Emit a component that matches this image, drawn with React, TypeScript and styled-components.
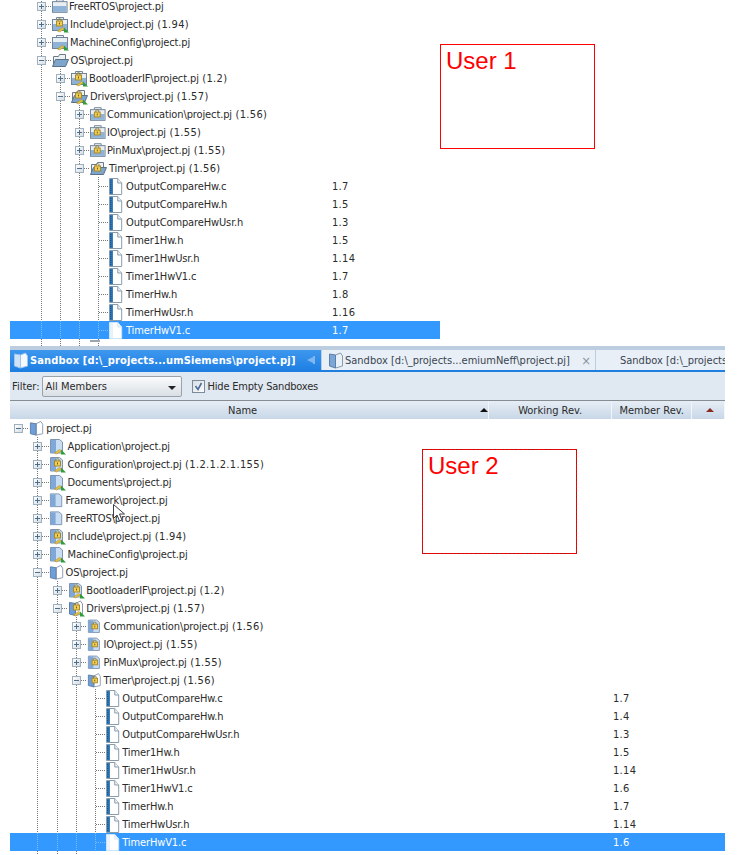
import React from "react";
import styled, { createGlobalStyle } from "styled-components";

const Global = createGlobalStyle`
  html, body { margin: 0; padding: 0; background: #fff; }
  body { font-family: "DejaVu Sans Condensed", Tahoma, "DejaVu Sans", sans-serif; font-size: 11px; color: #2b2b2b; }
`;

const Page = styled.div`
  position: relative;
  width: 738px;
  height: 855px;
  overflow: hidden;
  background: #fff;
`;

const TopPanel = styled.section`
  position: relative;
  height: 346px;
  padding-left: 10px;
  box-sizing: border-box;
  overflow: hidden;
`;

const BottomPanel = styled.section`
  position: relative;
  width: 715px;
  height: 509px;
  margin-left: 10px;
  overflow: hidden;
`;

const TopList = styled.div`
  width: 430px;
  margin-top: -3px;
`;

const Note = styled.div<{ $dotted?: boolean; $x: number; $y: number }>`
  position: absolute;
  left: ${(p) => p.$x}px;
  top: ${(p) => p.$y}px;
  width: 155px;
  height: 105px;
  box-sizing: border-box;
  border: 1px solid #ff0000;
  ${(p) => (p.$dotted ? "border-image: repeating-linear-gradient(45deg, #ff0000 0 2px, #a01818 2px 3px) 1;" : "")}
  padding: 0 5px;
  color: #ff0000;
  font: 24px/32px "Liberation Sans", Arial, sans-serif;
`;

const Row = styled.div<{ $selected?: boolean; $pad: number }>`
  display: flex;
  align-items: center;
  height: 18px;
  padding-left: ${(p) => p.$pad}px;
  background: ${(p) => (p.$selected ? "#3399ff" : "transparent")};
  color: ${(p) => (p.$selected ? "#ffffff" : "#2b2b2b")};
`;

const TreePart = styled.div<{ $w: number }>`
  display: flex;
  align-items: center;
  flex: 0 0 ${(p) => p.$w}px;
  height: 18px;
`;

const Guide = styled.span<{ $step: number; $hidden?: boolean; $selected?: boolean }>`
  flex: 0 0 ${(p) => p.$step}px;
  height: 100%;
  box-sizing: border-box;
  margin: 0;
  background-image: ${(p) =>
    p.$hidden
      ? "none"
      : `linear-gradient(${p.$selected ? "#7dbcf7" : "#777"} 50%, transparent 50%)`};
  background-size: 1px 2px;
  background-repeat: repeat-y;
  background-position: 8px 0;
`;

const Branch = styled.span<{ $step: number; $selected?: boolean }>`
  position: relative;
  flex: 0 0 ${(p) => p.$step}px;
  height: 100%;
  display: flex;
  align-items: center;
  padding-left: 4px;
  box-sizing: border-box;
  &::before {
    content: "";
    position: absolute;
    left: 8px;
    top: 0;
    bottom: 0;
    width: 1px;
    background-image: linear-gradient(${(p) => (p.$selected ? "#7dbcf7" : "#777")} 50%, transparent 50%);
    background-size: 1px 2px;
  }
  &::after {
    content: "";
    position: absolute;
    left: 9px;
    right: 0;
    top: 9px;
    height: 1px;
    background-image: linear-gradient(90deg, ${(p) => (p.$selected ? "#7dbcf7" : "#777")} 50%, transparent 50%);
    background-size: 2px 1px;
  }
`;

const BranchRoot = styled(Branch)`
  &::before { display: none; }
`;

const Expander = styled.span`
  position: relative;
  z-index: 1;
  width: 9px;
  height: 9px;
  box-sizing: border-box;
  border: 1px solid #9fb0bf;
  background: linear-gradient(135deg, #ffffff, #d6dde3);
  display: block;
`;

const Bar = styled.i<{ $v?: boolean }>`
  position: absolute;
  background: #4d6f8c;
  ${(p) =>
    p.$v
      ? "left: 3px; top: 1px; width: 1px; height: 5px;"
      : "left: 1px; top: 3px; width: 5px; height: 1px;"}
`;

const IconSlot = styled.span<{ $w: number }>`
  flex: 0 0 ${(p) => p.$w}px;
  min-width: 0;
  display: flex;
  align-items: center;
  height: 18px;
`;

const Label = styled.span`
  white-space: nowrap;
  letter-spacing: -0.12px;
`;

const Version = styled.span`
  letter-spacing: 0.35px;
`;

const Rev = styled.span`
  white-space: nowrap;
  letter-spacing: 0.3px;
`;

const Tail = styled.div<{ $h: number; $pad: number }>`
  display: flex;
  height: ${(p) => p.$h}px;
  padding-left: ${(p) => p.$pad}px;
  overflow: hidden;
`;

const Stub = styled.span`
  width: 10px;
  height: 2px;
  margin-top: 1px;
  margin-left: -19px;
  background: #9aa5b0;
`;

/* sandbox chrome */
const TabStrip = styled.div`
  display: flex;
  height: 26px;
  box-sizing: border-box;
  padding-top: 4px;
  background: #bccddf;
  border-bottom: 2px solid #1f7fe0;
  overflow: hidden;
`;

const Tab = styled.div<{ $active?: boolean; $w: number; $pad: number }>`
  flex: 0 0 ${(p) => p.$w}px;
  box-sizing: border-box;
  display: flex;
  align-items: center;
  gap: ${(p) => (p.$active ? 1 : 1)}px;
  padding-left: ${(p) => p.$pad}px;
  margin-right: 1px;
  white-space: nowrap;
  background: ${(p) => (p.$active ? "linear-gradient(#3d97ee, #1f80e4)" : "#e8eff6")};
  color: ${(p) => (p.$active ? "#ffffff" : "#3a4450")};
  font-weight: ${(p) => (p.$active ? 700 : 400)};
  letter-spacing: ${(p) => (p.$active ? "0.15px" : "0")};
  height: 20px;
`;

const TabClose = styled.span`
  margin-left: auto;
  margin-right: 4px;
  color: #8a949e;
  font-size: 13px;
  line-height: 1;
`;

const PinMark = styled.span`
  margin-left: auto;
  margin-right: 4px;
  display: flex;
`;

const FilterBar = styled.div`
  display: flex;
  align-items: center;
  height: 28px;
  padding-left: 2px;
  background: #e0e8f1;
`;

const FilterLabel = styled.span`
  margin-right: 2px;
`;

const Combo = styled.div`
  width: 140px;
  height: 21px;
  box-sizing: border-box;
  border: 1px solid #9aa2aa;
  border-radius: 2px;
  background: linear-gradient(#fafbfc, #d9dfe5);
  display: flex;
  align-items: center;
  padding: 0 5px 0 3px;
`;

const ComboArrow = styled.span`
  margin-left: auto;
  margin-top: 3px;
  width: 0;
  height: 0;
  border-left: 4px solid transparent;
  border-right: 4px solid transparent;
  border-top: 4px solid #222;
`;

const Check = styled.span`
  margin-left: 10px;
  margin-right: 3px;
  width: 13px;
  height: 13px;
  box-sizing: border-box;
  border: 1px solid #7d8a98;
  background: linear-gradient(135deg, #d9dee4, #fbfcfd);
  display: flex;
`;

const CheckLabel = styled.span`
  letter-spacing: -0.2px;
`;

const HeaderRow = styled.div`
  display: flex;
  height: 18px;
  border-top: 1px solid #868c92;
  background: linear-gradient(#e6edf5, #c8d7e7);
`;

const HeadCell = styled.div<{ $w: number; $center?: boolean }>`
  flex: 0 0 ${(p) => p.$w}px;
  box-sizing: border-box;
  display: flex;
  align-items: center;
  justify-content: ${(p) => (p.$center ? "center" : "flex-start")};
  border-right: 1px solid #f2f6fa;
`;

const NameHead = styled.span`
  margin-left: 218px;
`;

const SortArrow = styled.span<{ $color: string; $left: number }>`
  margin-left: ${(p) => p.$left}px;
  width: 0;
  height: 0;
  border-left: 4px solid transparent;
  border-right: 4px solid transparent;
  border-bottom: 4px solid ${(p) => p.$color};
`;

const TreeBody = styled.div`
  width: 715px;
  background: #fff;
`;

const Cursor = styled.svg`
  position: absolute;
  left: 103px;
  top: 158px;
`;

type Base = "folder" | "open" | "book" | "openBook";
type IconSpec = { base: Base; lock?: boolean; arrow?: boolean };

function Lock({ x, y }: { x: number; y: number }) {
  return (
    <g transform={`translate(${x} ${y})`}>
      <path d="M2 3V1.5C2 .5 5 .5 5 1.5V3" fill="none" stroke="#8c7a2a" />
      <rect x="0.5" y="3" width="6" height="5" fill="#f1cf52" stroke="#a8882c" />
      <rect x="3" y="4.6" width="1" height="1.8" fill="#6e5a16" />
    </g>
  );
}

function ProjectIcon({ base, lock, arrow }: IconSpec) {
  return (
    <svg width="18" height="17" viewBox="0 0 18 17" aria-hidden="true">
      {base === "folder" && (
        <g>
          <path d="M4.500 3.500V1.500h7v2" fill="#eef2f5" stroke="#76879a" />
          <rect x="0.5" y="3.500" width="15" height="11" fill="#e9eef3" stroke="#71859a" />
          <rect x="1" y="8" width="14" height="6" fill="#8fb3d6" />
        </g>
      )}
      {base === "open" && (
        <g>
          <path d="M1.500 12V4.500h5l1-2h6v5" fill="#eef1f4" stroke="#6d7b88" />
          <path d="M.5 14.500l3-7h13l-3 7z" fill="#7ea6cd" stroke="#5c7186" />
        </g>
      )}
      {base === "book" && (
        <g>
          <path d="M1.500 1.500h9l3 2.500v11h-12z" fill="#c8dcf2" stroke="#7d95b0" />
          <rect x="2" y="2" width="5" height="13" fill="#7fa8d9" />
        </g>
      )}
      {base === "openBook" && (
        <g>
          <path d="M7.500 3.500l5-2.500 2 3v10l-7 1.500z" fill="#ffffff" stroke="#8a9bb0" />
          <path d="M1.500 2.500l6 1v12l-6-1.500z" fill="#6f9fd8" stroke="#5d7ea6" />
        </g>
      )}
      {lock && <Lock x={base === "book" || base === "openBook" ? 5 : 4} y={arrow ? 2 : 3} />}
      {arrow && (
        <g>
          <path d="M5.500 15l5-3.500 2 1.500-5 3z" fill="#e6c23c" stroke="#a8882c" strokeWidth="0.5" />
          <path d="M12 16.500v-5l5 5z" fill="#2f9e3a" />
        </g>
      )}
    </svg>
  );
}

function FileIcon({ selected }: { selected?: boolean }) {
  return (
    <svg width="14" height="17" viewBox="0 0 16 17" preserveAspectRatio="none" aria-hidden="true">
      <path
        d="M.5 .5h9.500l4.500 4.500v11.500h-14z"
        fill="#ffffff"
        stroke={selected ? "#cfe4fa" : "#8296a8"}
      />
      <path d="M10 .5v4.500h4.500" fill="#f1f5f9" stroke={selected ? "#cfe4fa" : "#8296a8"} />
      <rect x="1" y="1" width="3.500" height="15" fill={selected ? "#e8f2fc" : "#2f76b4"} />
      {!selected && <path d="M2 2v13" stroke="#0e4a82" strokeDasharray="1 1" />}
    </svg>
  );
}

function BookTab({ open }: { open?: boolean }) {
  return (
    <svg width="16" height="17" viewBox="0 0 16 17" aria-hidden="true">
      <path d="M7.500 3l5-2 2 3v10l-7 2z" fill={open ? "#f6fafd" : "#e9f1f8"} stroke={open ? "#9ec6ee" : "#8a9bb0"} />
      <path d="M1.500 2l6 1v13l-6-2z" fill={open ? "#cfe3f8" : "#7aa6d8"} stroke={open ? "#9ec6ee" : "#5d7ea6"} />
    </svg>
  );
}

type TreeRow = {
  depth: number;
  label: string;
  rev?: string;
  icon?: IconSpec;
  state?: "plus" | "minus";
  slot: number;
  selected?: boolean;
};

function NodeRow({
  row,
  step,
  pad,
  width,
  skipFirst,
}: {
  row: TreeRow;
  step: number;
  pad: number;
  width: number;
  skipFirst?: boolean;
}) {
  const BranchKind = skipFirst && row.depth === 0 ? BranchRoot : Branch;
  const cut = row.label.indexOf(" (");
  const name = cut < 0 ? row.label : row.label.slice(0, cut);
  const version = cut < 0 ? "" : row.label.slice(cut);
  return (
    <Row $selected={row.selected} $pad={pad}>
      <TreePart $w={width}>
        {Array.from({ length: row.depth }).map((_, i) => (
          <Guide key={i} $step={step} $hidden={skipFirst && i === 0} $selected={row.selected} />
        ))}
        <BranchKind $step={step} $selected={row.selected}>
          {row.state && (
            <Expander>
              <Bar />
              {row.state === "plus" && <Bar $v />}
            </Expander>
          )}
        </BranchKind>
        <IconSlot $w={row.slot}>
          {row.icon ? <ProjectIcon {...row.icon} /> : <FileIcon selected={row.selected} />}
        </IconSlot>
        <Label>
          {name}
          {version && <Version>{version}</Version>}
        </Label>
      </TreePart>
      {row.rev && <Rev>{row.rev}</Rev>}
    </Row>
  );
}

const topRows: TreeRow[] = [
  { depth: 0, label: "FreeRTOS\\project.pj", state: "plus", slot: 17.5, icon: { base: "folder" } },
  { depth: 0, label: "Include\\project.pj (1.94)", state: "plus", slot: 18.5, icon: { base: "folder", lock: true, arrow: true } },
  { depth: 0, label: "MachineConfig\\project.pj", state: "plus", slot: 18.5, icon: { base: "folder", arrow: true } },
  { depth: 0, label: "OS\\project.pj", state: "minus", slot: 19, icon: { base: "open" } },
  { depth: 1, label: "BootloaderIF\\project.pj (1.2)", state: "plus", slot: 18.5, icon: { base: "folder", lock: true, arrow: true } },
  { depth: 1, label: "Drivers\\project.pj (1.57)", state: "minus", slot: 19.5, icon: { base: "open", lock: true, arrow: true } },
  { depth: 2, label: "Communication\\project.pj (1.56)", state: "plus", slot: 17.5, icon: { base: "folder", lock: true } },
  { depth: 2, label: "IO\\project.pj (1.55)", state: "plus", slot: 17.5, icon: { base: "folder", lock: true } },
  { depth: 2, label: "PinMux\\project.pj (1.55)", state: "plus", slot: 17.5, icon: { base: "folder", lock: true } },
  { depth: 2, label: "Timer\\project.pj (1.56)", state: "minus", slot: 19.5, icon: { base: "open", lock: true } },
  { depth: 3, label: "OutputCompareHw.c", rev: "1.7", slot: 17.5 },
  { depth: 3, label: "OutputCompareHw.h", rev: "1.5", slot: 17.5 },
  { depth: 3, label: "OutputCompareHwUsr.h", rev: "1.3", slot: 17.5 },
  { depth: 3, label: "Timer1Hw.h", rev: "1.5", slot: 17.5 },
  { depth: 3, label: "Timer1HwUsr.h", rev: "1.14", slot: 17.5 },
  { depth: 3, label: "Timer1HwV1.c", rev: "1.7", slot: 17.5 },
  { depth: 3, label: "TimerHw.h", rev: "1.8", slot: 17.5 },
  { depth: 3, label: "TimerHwUsr.h", rev: "1.16", slot: 17.5 },
  { depth: 3, label: "TimerHwV1.c", rev: "1.7", slot: 17.5, selected: true },
];

const bottomRows: TreeRow[] = [
  { depth: 0, label: "project.pj", state: "minus", slot: 17, icon: { base: "openBook" } },
  { depth: 1, label: "Application\\project.pj", state: "plus", slot: 19, icon: { base: "book", arrow: true } },
  { depth: 1, label: "Configuration\\project.pj (1.2.1.2.1.155)", state: "plus", slot: 19, icon: { base: "book", lock: true, arrow: true } },
  { depth: 1, label: "Documents\\project.pj", state: "plus", slot: 19, icon: { base: "book", arrow: true } },
  { depth: 1, label: "Framework\\project.pj", state: "plus", slot: 17, icon: { base: "book" } },
  { depth: 1, label: "FreeRTOS\\project.pj", state: "plus", slot: 17, icon: { base: "book" } },
  { depth: 1, label: "Include\\project.pj (1.94)", state: "plus", slot: 19, icon: { base: "book", lock: true, arrow: true } },
  { depth: 1, label: "MachineConfig\\project.pj", state: "plus", slot: 19, icon: { base: "book", arrow: true } },
  { depth: 1, label: "OS\\project.pj", state: "minus", slot: 17, icon: { base: "openBook" } },
  { depth: 2, label: "BootloaderIF\\project.pj (1.2)", state: "plus", slot: 18.5, icon: { base: "book", lock: true, arrow: true } },
  { depth: 2, label: "Drivers\\project.pj (1.57)", state: "minus", slot: 18.5, icon: { base: "openBook", lock: true, arrow: true } },
  { depth: 3, label: "Communication\\project.pj (1.56)", state: "plus", slot: 16.5, icon: { base: "book", lock: true } },
  { depth: 3, label: "IO\\project.pj (1.55)", state: "plus", slot: 16.5, icon: { base: "book", lock: true } },
  { depth: 3, label: "PinMux\\project.pj (1.55)", state: "plus", slot: 16.5, icon: { base: "book", lock: true } },
  { depth: 3, label: "Timer\\project.pj (1.56)", state: "minus", slot: 16.5, icon: { base: "openBook", lock: true } },
  { depth: 4, label: "OutputCompareHw.c", rev: "1.7", slot: 16 },
  { depth: 4, label: "OutputCompareHw.h", rev: "1.4", slot: 16 },
  { depth: 4, label: "OutputCompareHwUsr.h", rev: "1.3", slot: 16 },
  { depth: 4, label: "Timer1Hw.h", rev: "1.5", slot: 16 },
  { depth: 4, label: "Timer1HwUsr.h", rev: "1.14", slot: 16 },
  { depth: 4, label: "Timer1HwV1.c", rev: "1.6", slot: 16 },
  { depth: 4, label: "TimerHw.h", rev: "1.7", slot: 16 },
  { depth: 4, label: "TimerHwUsr.h", rev: "1.14", slot: 16 },
  { depth: 4, label: "TimerHwV1.c", rev: "1.6", slot: 16, selected: true },
];

export default function App() {
  return (
    <Page>
      <Global />
      <TopPanel>
        <TopList>
          {topRows.map((r) => (
            <NodeRow key={r.label} row={r} step={19} pad={22.5} width={299.5} />
          ))}
          <Tail $h={7} $pad={22.5}>
            <Guide $step={19} />
            <Guide $step={19} />
            <Guide $step={19} />
            <Guide $step={19} />
            <Stub />
          </Tail>
        </TopList>
        <Note $x={440} $y={44}>User 1</Note>
      </TopPanel>
      <BottomPanel>
        <TabStrip>
          <Tab $active $w={311} $pad={3}>
            <BookTab open />
            <span>Sandbox [d:\_projects...umSiemens\project.pj]</span>
            <PinMark>
              <svg width="10" height="10" viewBox="0 0 10 10" aria-hidden="true">
                <path d="M0 5l6-3v6zM6 1h2v8H6z" fill="#7fb6ee" />
              </svg>
            </PinMark>
          </Tab>
          <Tab $w={273} $pad={6}>
            <BookTab />
            <span>Sandbox [d:\_projects...emiumNeff\project.pj]</span>
            <TabClose>×</TabClose>
          </Tab>
          <Tab $w={200} $pad={24}>
            <span>Sandbox [d:\_projects...</span>
          </Tab>
        </TabStrip>
        <FilterBar>
          <FilterLabel>Filter:</FilterLabel>
          <Combo>
            All Members
            <ComboArrow />
          </Combo>
          <Check>
            <svg width="11" height="11" viewBox="0 0 11 11" aria-hidden="true">
              <path d="M2.500 5l2.500 3.500 3.500-6.500" fill="none" stroke="#4a6f9c" strokeWidth="1.600" />
            </svg>
          </Check>
          <CheckLabel>Hide Empty Sandboxes</CheckLabel>
        </FilterBar>
        <HeaderRow>
          <HeadCell $w={479}>
            <NameHead>Name</NameHead>
            <SortArrow $color="#111" $left={223} />
          </HeadCell>
          <HeadCell $w={123} $center>Working Rev.</HeadCell>
          <HeadCell $w={80} $center>Member Rev.</HeadCell>
          <HeadCell $w={33} $center>
            <SortArrow $color="#8a2a20" $left={4} />
          </HeadCell>
        </HeaderRow>
        <TreeBody>
          {bottomRows.map((r) => (
            <NodeRow key={r.label} row={r} step={19.25} pad={0} width={603} skipFirst />
          ))}
          <Tail $h={4} $pad={0}>
            <Guide $step={19.25} $hidden />
            <Guide $step={19.25} />
            <Guide $step={19.25} />
            <Guide $step={19.25} />
          </Tail>
        </TreeBody>
        <Note $dotted $x={412} $y={103}>User 2</Note>
        <Cursor width="12" height="18" viewBox="0 0 12 18" aria-hidden="true">
          <path d="M.5 .5v14l3.500-3.500 2.500 6 2.500-1-2.500-6h5z" fill="#ffffff" stroke="#3a3f45" />
        </Cursor>
      </BottomPanel>
    </Page>
  );
}
